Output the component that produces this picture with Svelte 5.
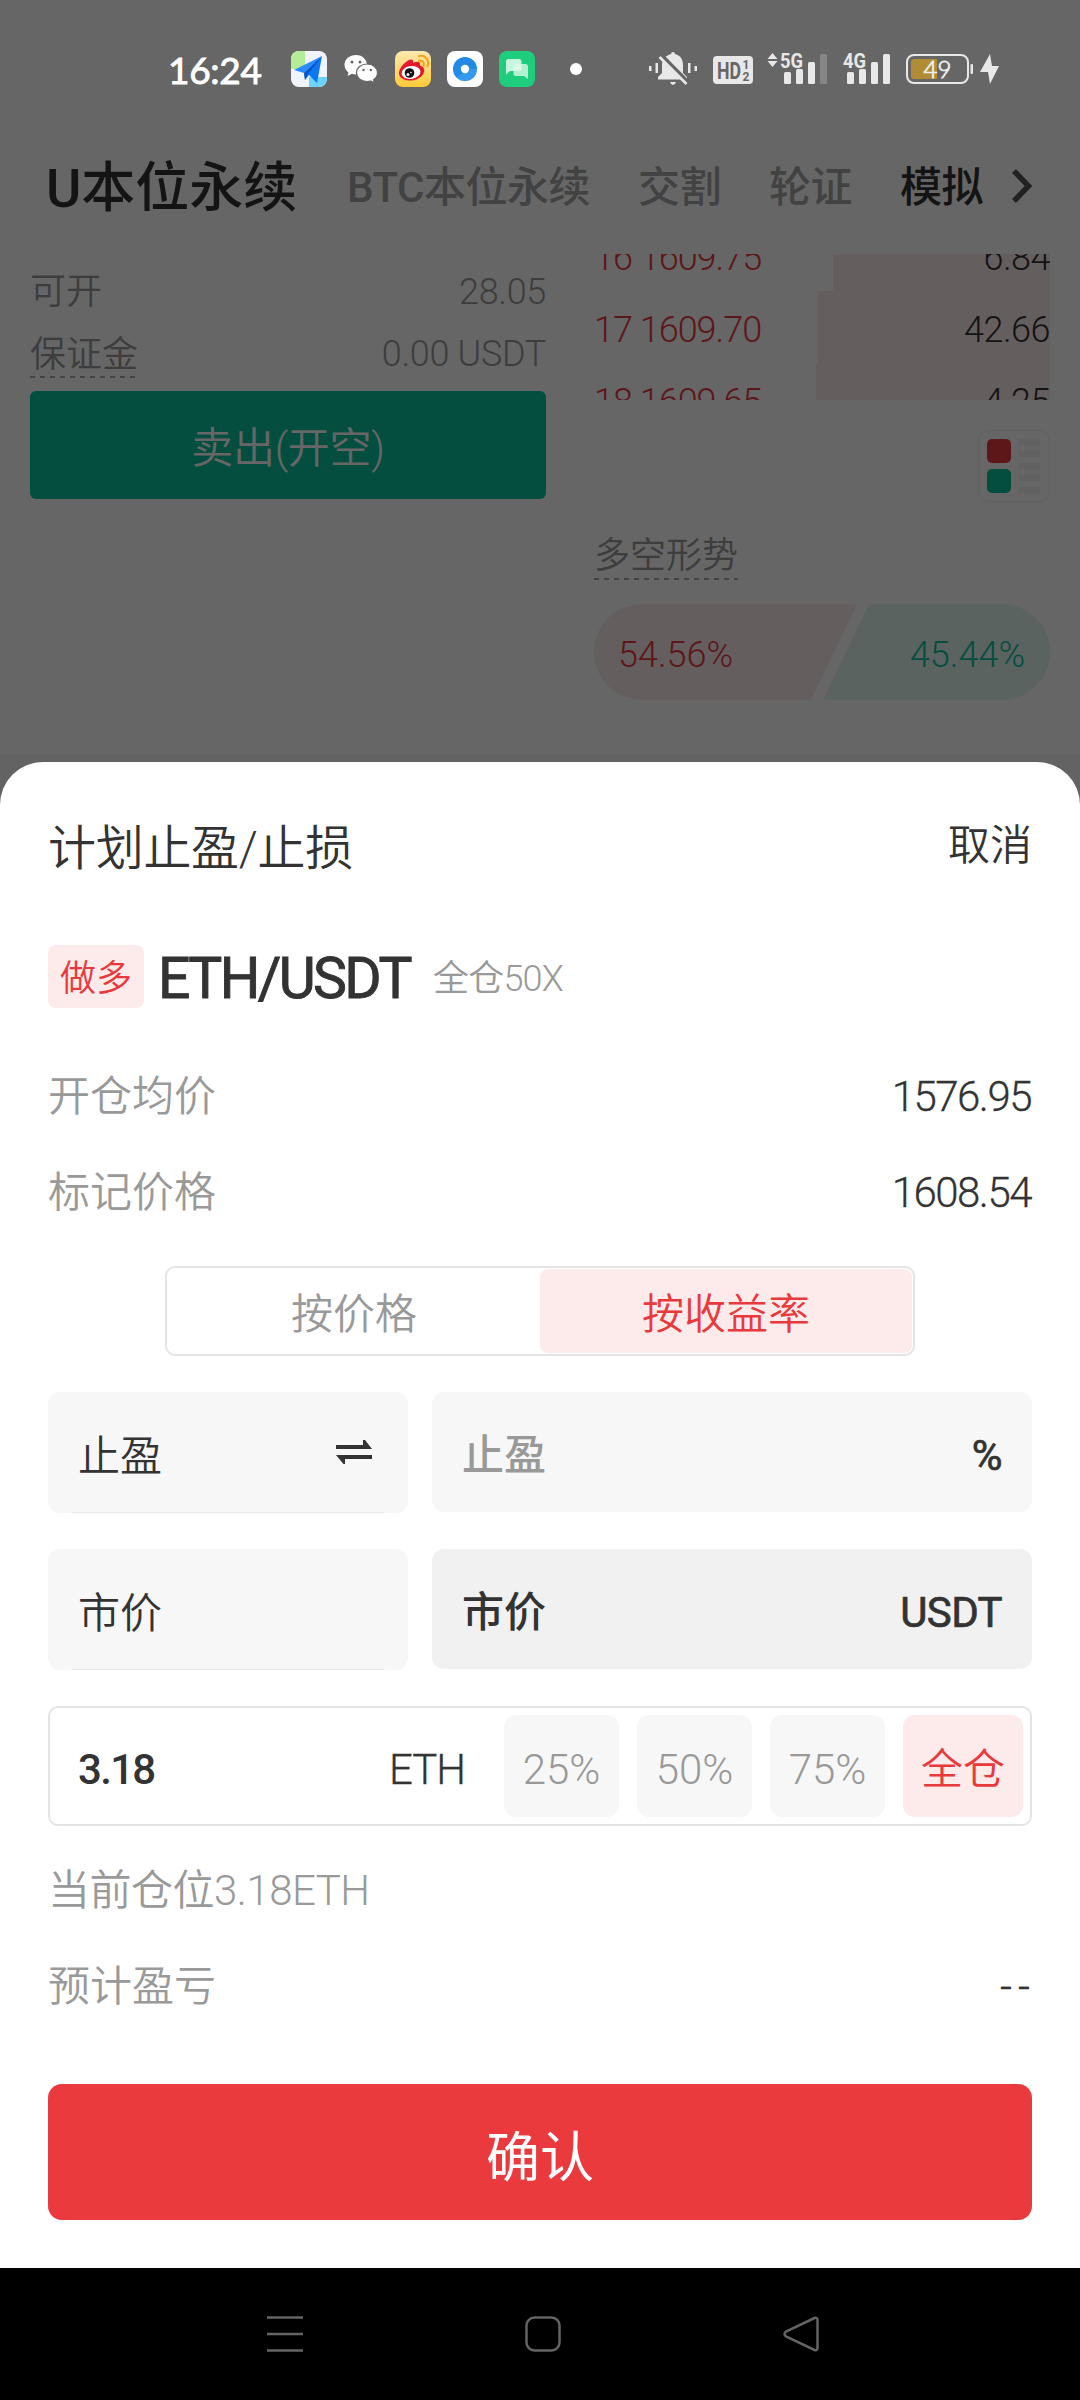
<script lang="ts">
  type Order = { level: number; price: string; amount: string; depth: number };

  const tabs = ['BTC本位永续', '交割', '轮证'];

  const asks: Order[] = [
    { level: 16, price: '1609.75', amount: '6.84', depth: 217 },
    { level: 17, price: '1609.70', amount: '42.66', depth: 232 },
    { level: 18, price: '1609.65', amount: '4.25', depth: 234 },
  ];

  const prices = [
    { label: '开仓均价', value: '1576.95' },
    { label: '标记价格', value: '1608.54' },
  ];

  const portions = ['25%', '50%', '75%', '全仓'];

  let mode = $state('按收益率');
  let portion = $state('全仓');
</script>

<div class="screen">
  <header class="status">
    <span class="clock">16:24</span>
    <svg class="app-icon map" viewBox="0 0 36 36">
      <rect width="36" height="36" rx="8" fill="#f1f3fa" />
      <path d="M8 0h6v18H0V8a8 8 0 0 1 8-8z" fill="#b5ec97" />
      <path d="M18 26h18v2a8 8 0 0 1-8 8H18z" fill="#6ed3fb" />
      <path d="M31 5 3 19l10 3z" fill="#2a8cff" />
      <path d="M31 5 13 22l1 7 4-5 8 8z" fill="#0c77f5" />
      <path d="M31 5 13 22l1 7 3-6z" fill="#0755c4" />
    </svg>
    <svg class="wechat" viewBox="0 0 34 30">
      <path d="M12 1C5.400 1 .5 5.300.5 11c0 3.200 1.600 5.700 4 7.500L3.500 22l4.300-2.200c1.300.4 2.700.6 4.200.6C18.500 20.400 23 16 23 11S18.600 1 12 1z" fill="#fff" />
      <path d="M23 10c-5.800 0-10.500 3.900-10.500 8.700S17 27.500 23 27.500c1.300 0 2.500-.2 3.600-.5l3.900 2-1-3.300c2.400-1.600 4-4 4-7C33.500 13.900 28.900 10 23 10z" fill="#fff" stroke="#666" stroke-width="1.200" />
      <g fill="#666">
        <circle cx="8" cy="8" r="1.500" /><circle cx="16" cy="8" r="1.500" />
        <circle cx="19.500" cy="16" r="1.200" /><circle cx="26.800" cy="16" r="1.200" />
      </g>
    </svg>
    <svg class="app-icon weibo" viewBox="0 0 36 36">
      <defs>
        <linearGradient id="wb" x1="0" y1="0" x2="0" y2="1">
          <stop offset="0" stop-color="#fde9b0" /><stop offset="1" stop-color="#fdcb36" />
        </linearGradient>
      </defs>
      <rect width="36" height="36" rx="8" fill="url(#wb)" />
      <path d="M14 9c3-1.500 5 0 4 3 4-2 8-1.500 7 2.500 3 1 5 3 4 6.500-2 6-9 9-15 8.500S3.500 26 4 21.500C4.500 17 9.500 11 14 9z" fill="#e6162d" />
      <ellipse cx="16" cy="21.500" rx="9.500" ry="6.500" fill="#fff" transform="rotate(-8 16 21.500)" />
      <circle cx="14.500" cy="22" r="4.800" fill="#111" />
      <circle cx="13" cy="23.500" r="1.500" fill="#fff" /><circle cx="16" cy="21.500" r=".8" fill="#fff" />
      <path d="M24 9.500c4-.5 5.500 2 4.600 5M24 5c7-1 10.500 4 8.500 10" fill="none" stroke="#f7a01b" stroke-width="2" stroke-linecap="round" />
    </svg>
    <svg class="app-icon ring" viewBox="0 0 36 36">
      <rect width="36" height="36" rx="8" fill="#fff" />
      <circle cx="18" cy="18" r="12" fill="#2189e6" />
      <path d="M9.500 26.500A12 12 0 0 0 30 18h-8z" fill="#42a4f3" opacity=".6" />
      <circle cx="18" cy="18" r="4.200" fill="#fff" />
    </svg>
    <svg class="app-icon chat" viewBox="0 0 36 36">
      <rect width="36" height="36" rx="8" fill="#1fce7c" />
      <path d="M17 13h9.500a2.500 2.500 0 0 1 2.500 2.500V28l-4-3h-8a2.500 2.500 0 0 1-2.500-2.500v-7A2.500 2.500 0 0 1 17 13z" fill="#b5f0d2" />
      <path d="M9.500 8H20a2.500 2.500 0 0 1 2.500 2.500v7A2.500 2.500 0 0 1 20 20h-9l-4 3.500v-13A2.500 2.500 0 0 1 9.500 8z" fill="#dcf8ea" opacity=".9" />
    </svg>
    <span class="dot"></span>

    <svg class="mute" viewBox="0 0 48 34">
      <g fill="#e8e8e8">
        <rect y="14" width="2.500" height="5" /><rect x="6.500" y="11" width="2.500" height="10" />
        <rect x="39" y="11" width="2.500" height="10" /><rect x="45.500" y="14" width="2.500" height="5" />
        <path d="M22 2a2 2 0 0 1 4 0c6 1.500 8 6 8 11v8l4 4v2.500H9V25l4-4v-8c0-5 3-9.500 9-11z" />
        <path d="M21 30h6q-1 3-3 3t-3-3z" />
      </g>
      <path d="M12 3.500 39 31" stroke="#666" stroke-width="5" />
      <path d="M10.500 5 37.500 32" stroke="#e8e8e8" stroke-width="2.600" />
    </svg>
    <svg class="hd" viewBox="0 0 40 28">
      <rect width="40" height="28" rx="4" fill="#e8e8e8" />
      <g fill="#666" font-family="Roboto, sans-serif" font-weight="700">
        <text x="4" y="22.500" font-size="24" textLength="24" lengthAdjust="spacingAndGlyphs">HD</text>
        <text x="29.500" y="13" font-size="12">1</text>
        <text x="29.500" y="25" font-size="12">2</text>
      </g>
    </svg>
    <svg class="signal five" viewBox="0 0 62 34">
      <g fill="#e8e8e8">
        <path d="m5.500 1 5 6H.5zM5.500 15l5-6H.5z" />
        <text x="13" y="15.500" font-family="Roboto, sans-serif" font-weight="700" font-size="20" textLength="23" lengthAdjust="spacingAndGlyphs">5G</text>
        <rect x="17" y="20" width="7" height="12" rx="1.500" />
        <rect x="29" y="17" width="7" height="15" rx="1.500" />
        <rect x="41" y="10" width="7" height="22" rx="1.500" />
      </g>
      <rect x="53" y="2" width="7" height="30" rx="1.500" fill="#868686" />
    </svg>
    <svg class="signal four" viewBox="0 0 48 34">
      <g fill="#e8e8e8">
        <text x="0" y="15.500" font-family="Roboto, sans-serif" font-weight="700" font-size="20" textLength="23" lengthAdjust="spacingAndGlyphs">4G</text>
        <rect x="4" y="20" width="7" height="12" rx="1.500" />
        <rect x="16" y="17" width="7" height="15" rx="1.500" />
        <rect x="28" y="10" width="7" height="22" rx="1.500" />
        <rect x="40" y="2" width="7" height="30" rx="1.500" />
      </g>
    </svg>
    <svg class="battery" viewBox="0 0 68 30">
      <rect x="1" y="1" width="61" height="28" rx="7" fill="none" stroke="#e8e8e8" stroke-width="2" />
      <path d="M8 5h23v20H8a3 3 0 0 1-3-3V8a3 3 0 0 1 3-3z" fill="#b08d35" />
      <rect x="64.500" y="10" width="2.500" height="10" rx="1" fill="#e8e8e8" />
      <text x="17.500" y="23.500" font-family="Lato, sans-serif" font-size="24" fill="#eee" stroke="#eee" stroke-width=".8">49</text>
    </svg>
    <svg class="bolt" viewBox="0 0 20 30">
      <path d="M10 0 0 18h8l2 12 9-18h-7z" fill="#e8e8e8" />
    </svg>
  </header>

  <nav class="tabs">
    <span class="current">U本位永续</span>
    {#each tabs as tab}
      <span class="tab">{tab}</span>
    {/each}
    <span class="tab demo">模拟</span>
    <svg class="more" viewBox="0 0 22 36">
      <path d="m3 3 14.500 15L3 33" fill="none" stroke="#555" stroke-width="5.500" />
    </svg>
  </nav>

  <main class="market">
    <section class="order">
      <div class="order-row"><span>可开</span><span class="figure">28.05</span></div>
      <div class="order-row"><span class="hint">保证金</span><span class="figure">0.00 USDT</span></div>
      <button class="sell">卖出(开空)</button>
    </section>

    <section class="book">
      <div class="asks">
        {#each asks as ask}
          <div class="ask">
            <span class="price">{ask.level} {ask.price}</span>
            <span class="depth" style="width: {ask.depth}px">{ask.amount}</span>
          </div>
        {/each}
      </div>
      <div class="layout-switch">
        <div class="squares"><i class="up"></i><i class="down"></i></div>
        <div class="lines"><i></i><i></i><i></i><i></i><i></i></div>
      </div>
      <span class="hint trend">多空形势</span>
      <div class="ratio">
        <span class="long">54.56%</span>
        <span class="short">45.44%</span>
      </div>
    </section>
    <div class="band"></div>
  </main>

  <div class="backdrop"></div>

  <section class="sheet">
    <div class="sheet-head">
      <h2>计划止盈/止损</h2>
      <span class="cancel">取消</span>
    </div>

    <div class="pair">
      <span class="side">做多</span>
      <span class="symbol">ETH/USDT</span>
      <span class="leverage">全仓50X</span>
    </div>

    {#each prices as row}
      <div class="info"><span>{row.label}</span><b>{row.value}</b></div>
    {/each}

    <div class="segment">
      {#each ['按价格', '按收益率'] as item}
        <button class:active={mode === item} onclick={() => (mode = item)}>{item}</button>
      {/each}
    </div>

    <div class="fields">
      <div class="select">
        <span>止盈</span>
        <svg class="swap" viewBox="0 0 36 24">
          <path d="M0 5h27V0h2l7 9H0zM36 15v4H9v5H7.500L0 15z" fill="#333" />
        </svg>
      </div>
      <div class="input empty"><span>止盈</span><b>%</b></div>
    </div>
    <div class="fields">
      <div class="select"><span>市价</span></div>
      <div class="input locked"><span>市价</span><b>USDT</b></div>
    </div>

    <div class="amount">
      <b>3.18</b>
      <span class="coin">ETH</span>
      {#each portions as item}
        <button class="chip" class:active={portion === item} onclick={() => (portion = item)}>{item}</button>
      {/each}
    </div>

    <div class="info position"><span>当前仓位3.18ETH</span></div>
    <div class="info"><span>预计盈亏</span><b class="pending">--</b></div>

    <button class="confirm">确认</button>
  </section>

  <footer class="nav">
    <svg viewBox="0 0 36 36"><path d="M0 1.500h36M0 18h36M0 34.500h36" /></svg>
    <svg viewBox="0 0 36 36"><rect x="1.500" y="1.500" width="33" height="33" rx="8" /></svg>
    <svg viewBox="0 0 36 36"><path d="M31.500 2 3 15.500q-3 2.500 0 5L31.500 34q3 1 3-2V4q0-3-3-2z" /></svg>
  </footer>
</div>

<style>
  :global(body) {
    margin: 0;
    background: #000;
  }

  .screen {
    position: relative;
    display: flex;
    flex-direction: column;
    width: 1080px;
    height: 2400px;
    overflow: hidden;
    background: #fff;
    color: #333;
    font-family: 'Roboto', 'Noto Sans CJK SC', sans-serif;
    font-size: 42px;
    font-weight: 350;
    line-height: 1;
  }

  .screen * {
    box-sizing: border-box;
  }

  button {
    padding: 0;
    border: none;
    background: none;
    color: inherit;
    font: inherit;
    letter-spacing: inherit;
  }

  svg {
    display: block;
    flex: none;
    overflow: visible;
  }

  /* status bar */
  .status {
    position: relative;
    z-index: 2;
    display: flex;
    align-items: center;
    height: 138px;
    padding-left: 168px;
  }

  .clock {
    width: 123px;
    color: #fff;
    font-family: 'Lato', sans-serif;
    font-size: 37px;
    font-weight: 400;
    letter-spacing: -0.3px;
    -webkit-text-stroke: 0.9px #fff;
  }

  .app-icon {
    width: 36px;
    height: 36px;
  }

  .wechat {
    width: 34px;
    height: 30px;
    margin: 0 17px;
  }

  .ring {
    margin: 0 16px;
  }

  .dot {
    width: 12px;
    height: 12px;
    margin: 0 67px 0 35px;
    border-radius: 50%;
    background: #fff;
  }

  .mute {
    width: 48px;
    height: 34px;
  }

  .hd {
    width: 40px;
    height: 28px;
    margin: 2px 14px 0 16px;
  }

  .signal {
    height: 34px;
  }

  .five {
    width: 62px;
  }

  .four {
    width: 48px;
    margin-left: 14px;
  }

  .battery {
    width: 68px;
    height: 30px;
    margin-left: 15px;
  }

  .bolt {
    width: 20px;
    height: 30px;
    margin-left: 6px;
  }

  /* contract tabs */
  .tabs {
    display: flex;
    align-items: center;
    height: 116px;
    padding: 0 0 17px 46px;
  }

  .current {
    width: 301px;
    padding-top: 3px;
    font-size: 54px;
    font-weight: 500;
  }

  .tab {
    margin-right: 48px;
    color: #a5a5a5;
    font-weight: 500;
    letter-spacing: -0.5px;
    white-space: nowrap;
  }

  .demo {
    margin-right: 28px;
    color: #333;
  }

  .more {
    width: 22px;
    height: 36px;
    margin-bottom: 4px;
  }

  /* trading page behind the sheet */
  .market {
    display: grid;
    grid-template-columns: 516px 456px;
    grid-template-rows: 501px 55px;
    column-gap: 48px;
    height: 556px;
    padding: 0 30px;
    font-size: 36px;
    letter-spacing: 0;
  }

  .order-row {
    display: flex;
    justify-content: space-between;
    align-items: center;
    height: 62px;
    padding-top: 2px;
    color: #999;
  }

  .order-row:first-child {
    margin-top: 6px;
  }

  .figure {
    letter-spacing: -0.3px;
  }

  .hint {
    height: 48px;
    padding-top: 7px;
    background: repeating-linear-gradient(90deg, #aaa 0 5px, transparent 5px 10px) bottom left / 100% 2px no-repeat;
  }

  .sell {
    width: 100%;
    height: 108px;
    margin-top: 7px;
    padding-top: 8px;
    border-radius: 6px;
    background: #0cc29f;
    color: #fff;
    font-size: 42px;
    letter-spacing: -0.3px;
  }

  .book {
    display: flex;
    flex-direction: column;
  }

  .asks {
    display: flex;
    flex-direction: column;
    justify-content: center;
    height: 146px;
    margin-bottom: 30px;
    overflow: hidden;
  }

  .ask {
    display: flex;
    flex: none;
    justify-content: space-between;
    height: 72px;
    line-height: 65px;
  }

  .ask span {
    padding-top: 7px;
  }

  .price {
    color: #e83a3d;
    letter-spacing: -1px;
  }

  .depth {
    background: #fbebeb;
    letter-spacing: -0.5px;
    text-align: right;
  }

  .layout-switch {
    display: flex;
    align-self: flex-end;
    gap: 7px;
    width: 72px;
    height: 72px;
    padding: 8px;
    border: 1px solid #f2f2f2;
    border-radius: 10px;
  }

  .squares,
  .lines {
    display: flex;
    flex-direction: column;
    justify-content: space-between;
  }

  .squares i {
    width: 24px;
    height: 24px;
    border-radius: 5px;
  }

  .up {
    background: #e83a3d;
  }

  .down {
    background: #0cc29f;
  }

  .lines i {
    width: 22px;
    height: 6px;
    background: #f5f5f5;
  }

  .trend {
    align-self: flex-start;
    margin: 30px 0 24px;
    padding-top: 6px;
    color: #999;
  }

  .ratio {
    display: flex;
    justify-content: space-between;
    height: 96px;
    border-radius: 48px;
    overflow: hidden;
    line-height: 102px;
  }

  .long {
    width: 263px;
    padding-left: 24px;
    background: #fbebeb;
    color: #e83a3d;
    clip-path: polygon(0 0, 100% 0, 217px 100%, 0 100%);
  }

  .short {
    width: 227px;
    margin-left: -34px;
    padding-right: 25px;
    background: #e3f7f3;
    color: #0cc29f;
    text-align: right;
    clip-path: polygon(46px 0, 100% 0, 100% 100%, 0 100%);
  }

  .band {
    grid-column: 1 / -1;
    margin: 0 -30px;
    background: #f7f7f7;
  }

  .backdrop {
    position: absolute;
    z-index: 1;
    inset: 0;
    background: rgba(0, 0, 0, 0.6);
  }

  /* bottom sheet */
  .sheet {
    position: relative;
    z-index: 2;
    height: 1506px;
    margin-top: -48px;
    padding: 0 48px;
    border-radius: 43px 43px 0 0;
    background: #fff;
  }

  .sheet-head {
    display: flex;
    justify-content: space-between;
    align-items: center;
    height: 169px;
    padding-top: 4px;
  }

  h2 {
    margin: 0;
    font-size: 48px;
    font-weight: 350;
    letter-spacing: -0.3px;
  }

  .cancel {
    margin-bottom: 6px;
  }

  .pair {
    display: flex;
    align-items: center;
    height: 90px;
    font-size: 36px;
  }

  .side {
    width: 96px;
    height: 63px;
    border-radius: 8px;
    background: #fdeaea;
    color: #e83a3d;
    line-height: 69px;
    text-align: center;
  }

  .symbol {
    width: 275px;
    margin-left: 14px;
    padding-top: 4px;
    font-size: 57px;
    font-weight: 400;
    letter-spacing: -2.6px;
    -webkit-text-stroke: 0.9px #333;
  }

  .leverage {
    padding-top: 5px;
    color: #999;
    letter-spacing: -0.8px;
  }

  .info {
    display: flex;
    justify-content: space-between;
    align-items: center;
    height: 96px;
    padding-top: 4px;
    color: #999;
  }

  .pair + .info {
    margin-top: 26px;
  }

  .info b {
    margin-right: 1px;
    color: #333;
    font-weight: 350;
    letter-spacing: -1.5px;
    -webkit-text-stroke: 0.3px #333;
  }

  .info .pending {
    margin-right: -4px;
    letter-spacing: 6px;
  }

  .segment {
    display: flex;
    width: 750px;
    height: 90px;
    margin: 27px auto 36px;
    padding: 1px;
    border: 2px solid #e4e4e4;
    border-radius: 10px;
  }

  .segment button {
    flex: 1;
    padding-top: 8px;
    border-radius: 8px;
    color: #999;
  }

  .segment .active {
    background: #fdeaea;
    color: #e83a3d;
  }

  .fields {
    display: flex;
    gap: 24px;
    height: 121px;
    margin-bottom: 36px;
  }

  .select,
  .input {
    display: flex;
    justify-content: space-between;
    align-items: center;
    border-radius: 12px;
    background: #f7f7f7;
  }

  .select {
    width: 360px;
    padding: 8px 36px 0 30px;
    background: linear-gradient(#eaeaea, #eaeaea) bottom / 312px 1px no-repeat #f7f7f7;
  }

  .swap {
    width: 36px;
    height: 24px;
    margin-bottom: 10px;
  }

  .input {
    flex: 1;
    height: 120px;
    padding: 8px 30px 0 30px;
    font-weight: 500;
  }

  .input b {
    font-weight: 400;
    letter-spacing: -0.6px;
    -webkit-text-stroke: 0.7px #333;
  }

  .empty span {
    color: #999;
  }

  .locked {
    background: #f1f1f1;
  }

  .amount {
    display: flex;
    align-items: center;
    gap: 18px;
    height: 120px;
    padding: 0 7px 0 28px;
    border: 2px solid #e4e4e4;
    border-radius: 10px;
  }

  .amount b {
    flex: 1;
    padding-top: 7px;
    font-weight: 500;
    letter-spacing: -1.7px;
  }

  .coin {
    margin-right: 21px;
    padding-top: 7px;
    letter-spacing: -1px;
    -webkit-text-stroke: 0.3px #333;
  }

  .chip {
    width: 115px;
    height: 102px;
    padding-top: 7px;
    border-radius: 12px;
    background: #f7f7f7;
    color: #999;
  }

  .chip.active {
    width: 120px;
    background: #fdeaea;
    color: #e83a3d;
  }

  .position {
    margin-top: 15px;
    letter-spacing: -0.5px;
  }

  .confirm {
    width: 100%;
    height: 136px;
    margin-top: 51px;
    padding-top: 13px;
    border-radius: 14px;
    background: #ea3a3d;
    color: #fff;
    font-size: 54px;
    font-weight: 400;
  }

  /* system navigation */
  .nav {
    position: relative;
    z-index: 2;
    display: flex;
    gap: 222px;
    height: 132px;
    padding: 48px 0 0 267px;
    background: #000;
  }

  .nav svg {
    width: 36px;
    height: 36px;
    fill: none;
    stroke: #646464;
    stroke-width: 2.5;
  }
</style>
